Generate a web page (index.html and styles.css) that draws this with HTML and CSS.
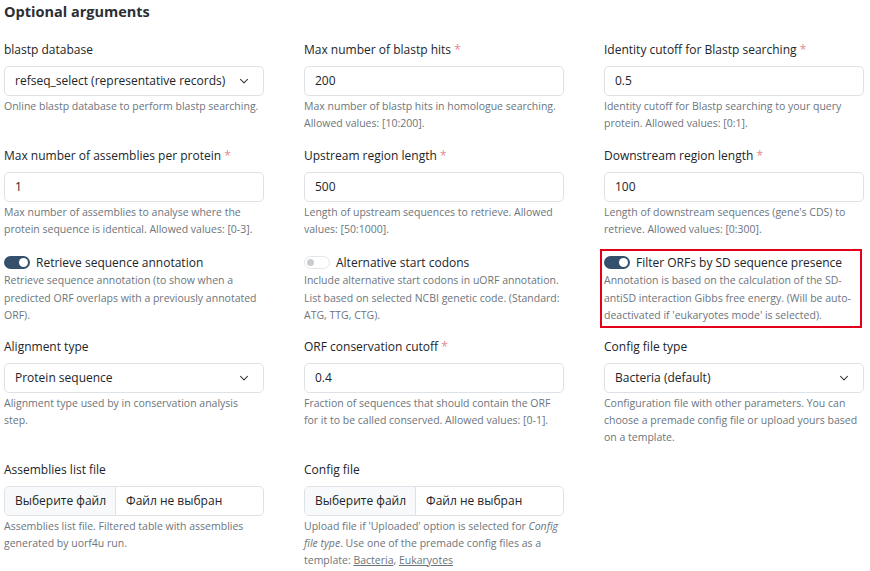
FILE: index.html
```html
<!DOCTYPE html>
<html>
<head>
<meta charset="utf-8">
<link rel="stylesheet" href="styles.css">
</head>
<body>
<div class="page">
  <h2 class="title">Optional arguments</h2>
  <div class="grid">
    <div class="field">
      <div class="label">blastp database</div>
      <div class="control select"><span>refseq_select (representative records)</span><svg class="chev" width="10" height="10" viewBox="0 0 16 16"><path d="M2.5 5.5l5.5 5.5 5.5-5.5" fill="none" stroke="#343a40" stroke-width="1.7" stroke-linecap="round" stroke-linejoin="round"/></svg></div>
      <div class="help">Online blastp database to perform blastp searching.</div>
    </div>
    <div class="field">
      <div class="label">Max number of blastp hits <span class="req">*</span></div>
      <div class="control">200</div>
      <div class="help">Max number of blastp hits in homologue searching. Allowed values: [10:200].</div>
    </div>
    <div class="field">
      <div class="label">Identity cutoff for Blastp searching <span class="req">*</span></div>
      <div class="control">0.5</div>
      <div class="help">Identity cutoff for Blastp searching to your query protein. Allowed values: [0:1].</div>
    </div>

    <div class="field">
      <div class="label">Max number of assemblies per protein <span class="req">*</span></div>
      <div class="control">1</div>
      <div class="help">Max number of assemblies to analyse where the protein sequence is identical. Allowed values: [0-3].</div>
    </div>
    <div class="field">
      <div class="label">Upstream region length <span class="req">*</span></div>
      <div class="control">500</div>
      <div class="help">Length of upstream sequences to retrieve. Allowed values: [50:1000].</div>
    </div>
    <div class="field">
      <div class="label">Downstream region length <span class="req">*</span></div>
      <div class="control">100</div>
      <div class="help">Length of downstream sequences (gene's CDS) to retrieve. Allowed values: [0:300].</div>
    </div>

    <div class="field toggle">
      <div class="switch-row"><span class="switch on"></span><span class="switch-label">Retrieve sequence annotation</span></div>
      <div class="help tight">Retrieve sequence annotation (to show when a predicted ORF overlaps with a previously annotated ORF).</div>
    </div>
    <div class="field toggle">
      <div class="switch-row"><span class="switch off"></span><span class="switch-label">Alternative start codons</span></div>
      <div class="help tight">Include alternative start codons in uORF annotation. List based on selected NCBI genetic code. (Standard: ATG, TTG, CTG).</div>
    </div>
    <div class="field toggle">
      <div class="highlight">
        <div class="switch-row"><span class="switch on"></span><span class="switch-label">Filter ORFs by SD sequence presence</span></div>
        <div class="help tight">Annotation is based on the calculation of the SD-antiSD interaction Gibbs free energy. (Will be auto-deactivated if 'eukaryotes mode' is selected).</div>
      </div>
    </div>

    <div class="field">
      <div class="label">Alignment type</div>
      <div class="control select"><span>Protein sequence</span><svg class="chev" width="10" height="10" viewBox="0 0 16 16"><path d="M2.5 5.5l5.5 5.5 5.5-5.5" fill="none" stroke="#343a40" stroke-width="1.7" stroke-linecap="round" stroke-linejoin="round"/></svg></div>
      <div class="help">Alignment type used by in conservation analysis step.</div>
    </div>
    <div class="field">
      <div class="label">ORF conservation cutoff <span class="req">*</span></div>
      <div class="control">0.4</div>
      <div class="help">Fraction of sequences that should contain the ORF for it to be called conserved. Allowed values: [0-1].</div>
    </div>
    <div class="field">
      <div class="label">Config file type</div>
      <div class="control select"><span>Bacteria (default)</span><svg class="chev" width="10" height="10" viewBox="0 0 16 16"><path d="M2.5 5.5l5.5 5.5 5.5-5.5" fill="none" stroke="#343a40" stroke-width="1.7" stroke-linecap="round" stroke-linejoin="round"/></svg></div>
      <div class="help">Configuration file with other parameters. You can choose a premade config file or upload yours based on a template.</div>
    </div>

    <div class="field">
      <div class="label">Assemblies list file</div>
      <div class="control file"><span class="file-btn">Выберите файл</span><span class="file-name">Файл не выбран</span></div>
      <div class="help">Assemblies list file. Filtered table with assemblies generated by uorf4u run.</div>
    </div>
    <div class="field">
      <div class="label">Config file</div>
      <div class="control file"><span class="file-btn">Выберите файл</span><span class="file-name">Файл не выбран</span></div>
      <div class="help">Upload file if 'Uploaded' option is selected for <i>Config file type</i>. Use one of the premade config files as a template: <a class="lnk">Bacteria</a>, <a class="lnk">Eukaryotes</a></div>
    </div>
    <div class="field"></div>
  </div>
</div>
</body>
</html>
```

FILE: styles.css
```css
html, body {
  margin: 0;
  padding: 0;
  background: #ffffff;
}
body {
  font-family: "Open Sans", "Noto Sans", sans-serif;
  color: #212529;
}
.page {
  padding: 0 0 0 4px;
}
.title {
  margin: 0;
  padding-top: 1px;
  font-size: 14.5px;
  font-weight: 700;
  line-height: 22px;
  color: #2b2f33;
}
.grid {
  display: grid;
  grid-template-columns: 260px 260px 260px;
  column-gap: 40px;
  row-gap: 14px;
  margin-top: 17px;
}
.field {
  min-width: 0;
}
.field.toggle {
  margin-bottom: -2px;
}
.label {
  font-size: 12px;
  line-height: 20px;
  margin-bottom: 6px;
  white-space: nowrap;
}
.req {
  color: #e4898f;
}
.control {
  box-sizing: border-box;
  height: 30px;
  border: 1px solid #dee2e6;
  border-radius: 5px;
  padding: 0 10px;
  font-size: 12px;
  line-height: 28px;
  display: flex;
  align-items: center;
  white-space: nowrap;
}
.select {
  justify-content: space-between;
  padding-right: 14px;
}
.chev {
  flex: none;
}
.file {
  padding: 0;
  overflow: hidden;
}
.file-btn {
  background: #f8f9fa;
  padding: 0 9px 0 10px;
  height: 100%;
  display: flex;
  align-items: center;
  border-right: 1px solid #dee2e6;
}
.file-name {
  padding: 0 10px;
}
.help {
  margin-top: 2px;
  font-size: 10.5px;
  line-height: 17px;
  color: #6c757d;
}
.help.tight {
  margin-top: 0;
  line-height: 17.5px;
}
.switch-row {
  display: flex;
  align-items: center;
  height: 20px;
}
.switch {
  position: relative;
  box-sizing: border-box;
  width: 26px;
  height: 13px;
  border-radius: 7px;
  flex: none;
  margin-right: 6px;
}
.switch.on {
  background: #34506d;
}
.switch.on::after {
  content: "";
  position: absolute;
  right: 2px;
  top: 2px;
  width: 9px;
  height: 9px;
  border-radius: 50%;
  background: #fff;
}
.switch.off {
  border: 1px solid #e3e6e9;
  background: #fff;
}
.switch.off::after {
  content: "";
  position: absolute;
  left: 2px;
  top: 2px;
  width: 7px;
  height: 7px;
  border-radius: 50%;
  background: #c8ccd0;
}
.switch-label {
  font-size: 12px;
}
.highlight {
  margin: -3px -2px -4px -4px;
  padding: 1px 0 1px 2px;
  border: 2px solid #e4001b;
  width: 256px;
}
.lnk {
  color: #6c757d;
  text-decoration: underline;
}
```
